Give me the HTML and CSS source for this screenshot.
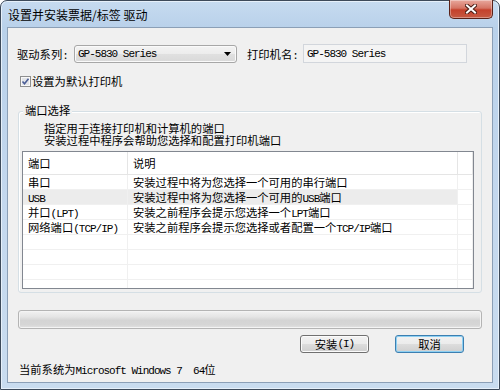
FILE: index.html
```html
<!DOCTYPE html>
<html>
<head>
<meta charset="utf-8">
<link rel="stylesheet" href="styles.css">
</head>
<body>
<div class="window">
  <div class="titlebar">
    <span class="title">设置并安装票据/标签 驱动</span>
    <div class="close">
      <svg width="12" height="10" viewBox="0 0 12 10">
        <path d="M2 1.5 L10 8.5 M10 1.5 L2 8.5" stroke="#4a1c14" stroke-width="4" stroke-linecap="square" fill="none"/>
        <path d="M2 1.5 L10 8.5 M10 1.5 L2 8.5" stroke="#ffffff" stroke-width="2" stroke-linecap="square" fill="none"/>
      </svg>
    </div>
  </div>
  <div class="client">
    <div class="row1">
      <span class="lbl lbl1">驱动系列<span class="l">:</span></span>
      <div class="combo">
        <span class="l">GP-5830 Series</span>
        <svg class="arrow" width="7" height="4" viewBox="0 0 7 4"><path d="M0 0 H7 L3.5 4 Z" fill="#000"/></svg>
      </div>
      <span class="lbl lbl2">打印机名<span class="l">:</span></span>
      <div class="edit"><span class="l">GP-5830 Series</span></div>
    </div>
    <div class="checkrow">
      <span class="cb">
        <svg width="11" height="11" viewBox="0 0 11 11">
          <rect x="0.5" y="0.5" width="10" height="10" fill="#f4f4f4" stroke="#8e8f8f"/>
          <rect x="1.5" y="1.5" width="8" height="8" fill="#e2e4e8" stroke="#f8f8f8"/>
          <path d="M2.5 5.5 L4.5 7.8 L8.5 2.8" stroke="#4b5e96" stroke-width="1.6" fill="none"/>
        </svg>
      </span>
      <span>设置为默认打印机</span>
    </div>
    <div class="group">
      <span class="legend">端口选择</span>
      <div class="desc">
        <div>指定用于连接打印机和计算机的端口</div>
        <div>安装过程中程序会帮助您选择和配置打印机端口</div>
      </div>
      <div class="list">
        <div class="lrow hdr"><div class="c">端口</div><div class="c">说明</div><div class="c"></div></div>
        <div class="lrow"><div class="c">串口</div><div class="c">安装过程中将为您选择一个可用的串行端口</div><div class="c"></div></div>
        <div class="lrow sel"><div class="c"><span class="l">USB</span></div><div class="c">安装过程中将为您选择一个可用的<span class="l">USB</span>端口</div><div class="c"></div></div>
        <div class="lrow"><div class="c">并口<span class="l">(LPT)</span></div><div class="c">安装之前程序会提示您选择一个<span class="l">LPT</span>端口</div><div class="c"></div></div>
        <div class="lrow"><div class="c">网络端口<span class="l">(TCP/IP)</span></div><div class="c">安装之前程序会提示您选择或者配置一个<span class="l">TCP/IP</span>端口</div><div class="c"></div></div>
        <div class="lrow"><div class="c"></div><div class="c"></div><div class="c"></div></div>
        <div class="lrow"><div class="c"></div><div class="c"></div><div class="c"></div></div>
        <div class="lrow"><div class="c"></div><div class="c"></div><div class="c"></div></div>
        <div class="lrow"><div class="c"></div><div class="c"></div><div class="c"></div></div>
      </div>
    </div>
    <div class="progress"></div>
    <div class="buttons">
      <div class="btn">安装<span class="l">(I)</span></div>
      <div class="btn def">取消</div>
    </div>
    <div class="status">当前系统为<span class="l">Microsoft Windows 7  64</span>位</div>
  </div>
</div>
</body>
</html>
```

FILE: styles.css
```css
* { box-sizing: border-box; }
html, body { margin: 0; padding: 0; }
body {
  width: 500px;
  height: 390px;
  overflow: hidden;
  font-family: "Noto Sans CJK SC", sans-serif;
  font-size: 11.3px;
  color: #000;
  background: #ffffff;
}
.l {
  font-family: "Liberation Mono", monospace;
  font-size: 11px;
  letter-spacing: -1px;
  white-space: pre;
}
.window {
  width: 500px;
  height: 390px;
  border: 1px solid #3d4a5a;
  border-radius: 7px 7px 0 0;
  background: linear-gradient(to bottom, #c6dbf0 0px, #b9d1ea 26px, #c4d8ee 200px, #c9dcef 100%);
  padding: 0 6px 6px 6px;
  display: flex;
  flex-direction: column;
  box-shadow: inset 0 0 0 1px #e6f0fa;
}
.titlebar {
  height: 26px;
  display: flex;
  align-items: flex-start;
  flex: none;
}
.title {
  font-size: 12px;
  line-height: 12px;
  margin-top: 8px;
  margin-left: 1px;
}
.close {
  margin-left: auto;
  margin-top: -1px;
  width: 44px;
  height: 19px;
  border: 1px solid #5a2118;
  border-top: none;
  border-radius: 0 0 5px 5px;
  background: linear-gradient(to bottom, #e8a89d 0%, #d57464 45%, #c4412c 55%, #c65a43 100%);
  box-shadow: inset 0 0 0 1px rgba(255,255,255,0.35);
  display: flex;
  align-items: center;
  justify-content: center;
}
.client {
  flex: 1;
  border: 1px solid #8b9fb6;
  background: #f0f0f0;
  display: flex;
  flex-direction: column;
}
.row1 {
  margin-top: 16px;
  height: 19px;
  padding-left: 9px;
  display: flex;
  align-items: center;
}
.lbl { white-space: nowrap; }
.lbl1 { width: 57px; }
.lbl2 { width: 56px; margin-left: 10px; }
.combo {
  width: 163px;
  height: 18px;
  border: 1px solid #a7a7a7;
  border-radius: 3px;
  background: linear-gradient(to bottom, #f3f3f3 0%, #ececec 50%, #e0e0e0 51%, #d9d9d9 100%);
  box-shadow: inset 0 0 0 1px #fafafa;
  display: flex;
  align-items: center;
  padding-left: 3px;
  padding-right: 5px;
}
.combo .arrow { margin-left: auto; }
.edit {
  width: 164px;
  height: 19px;
  border: 1px solid #d2d6dc;
  background: #f4f4f4;
  display: flex;
  align-items: center;
  padding-left: 3px;
}
.checkrow {
  margin-top: 10px;
  height: 16px;
  padding-left: 12px;
  display: flex;
  align-items: center;
}
.cb { width: 11px; height: 11px; margin-right: 1px; display: flex; }
.group {
  position: relative;
  margin: 22px 10px 0 10px;
  border: 1px solid #d5dfe5;
  border-radius: 3px;
  box-shadow: inset 1px 1px 0 #ffffff;
  padding: 10px 7px 3px 3px;
}
.legend {
  position: absolute;
  top: -8px;
  left: 4px;
  padding: 0 2px;
  line-height: 13px;
  background: #f0f0f0;
}
.desc {
  margin-left: 22px;
  line-height: 12px;
  height: 24px;
  white-space: nowrap;
}
.list {
  margin-top: 5px;
  width: 452px;
  height: 138px;
  border: 1px solid #828790;
  background: #ffffff;
  overflow: hidden;
}
.lrow {
  display: grid;
  grid-template-columns: 105px 330px 1fr;
  height: 15px;
}
.lrow .c {
  border-right: 1px solid #f0f0f0;
  border-bottom: 1px solid #f0f0f0;
  padding-left: 5px;
  line-height: 14px;
  white-space: nowrap;
  overflow: hidden;
}
.lrow.hdr { height: 23px; }
.lrow.hdr .c {
  border-right: 1px solid #e5e5e5;
  border-bottom: 1px solid #e5e5e5;
  line-height: 22px;
}
.lrow.sel .c:nth-child(1), .lrow.sel .c:nth-child(2) { background: #ececec; }
.progress {
  margin: 17px 10px 0 10px;
  height: 19px;
  border: 1px solid #b4b4b4;
  border-radius: 3px;
  background: linear-gradient(to bottom, #f2f2f2 0%, #e4e4e4 35%, #d4d4d4 55%, #d6d6d6 80%, #e2e2e2 100%);
  box-shadow: inset 0 0 0 1px #f4f4f4;
}
.buttons {
  margin-top: 6px;
  height: 18px;
  display: flex;
  justify-content: flex-end;
  gap: 26px;
  padding-right: 28px;
}
.btn {
  width: 69px;
  height: 18px;
  border: 1px solid #707070;
  border-radius: 3px;
  background: linear-gradient(to bottom, #f2f2f2 0%, #ebebeb 50%, #dddddd 51%, #cfcfcf 100%);
  box-shadow: inset 0 0 0 1px #fbfbfb;
  display: flex;
  align-items: center;
  justify-content: center;
  line-height: 14px;
}
.btn.def {
  border-color: #3c7fb1;
  box-shadow: inset 0 0 0 1px #8ed0f2;
}
.status {
  margin-top: 10px;
  padding-left: 11px;
  line-height: 12px;
  white-space: nowrap;
}
```
